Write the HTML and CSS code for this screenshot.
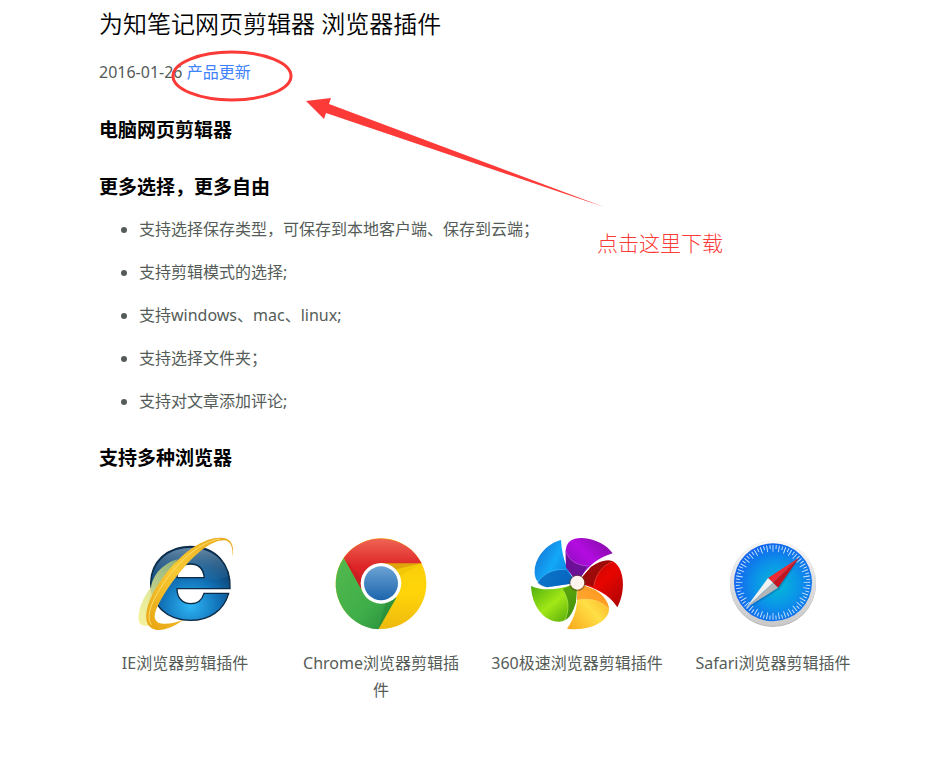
FILE: index.html
```html
<!DOCTYPE html>
<html lang="zh-CN">
<head>
<meta charset="utf-8">
<title>为知笔记网页剪辑器 浏览器插件</title>
<link rel="stylesheet" href="styles.css">
</head>
<body>
<main class="page">
  <article class="post">
    <h1 class="title">为知笔记网页剪辑器 浏览器插件</h1>
    <p class="meta">2016-01-26 <a href="#">产品更新</a></p>
    <h3 class="heading">电脑网页剪辑器</h3>
    <h3 class="heading">更多选择，更多自由</h3>
    <ul class="features">
      <li>支持选择保存类型，可保存到本地客户端、保存到云端；</li>
      <li>支持剪辑模式的选择;</li>
      <li>支持windows、mac、linux;</li>
      <li>支持选择文件夹；</li>
      <li>支持对文章添加评论;</li>
    </ul>
    <h3 class="heading">支持多种浏览器</h3>
  </article>
  <section class="browsers">
    <div class="browser">
      <svg class="logo" viewBox="0 0 330 330" aria-hidden="true">
        <defs>
          <radialGradient id="ieBlue" cx="0.5" cy="0.8" r="0.72">
            <stop offset="0" stop-color="#2db6f6"/><stop offset="0.5" stop-color="#1272b8"/><stop offset="1" stop-color="#0b3560"/>
          </radialGradient>
          <linearGradient id="ieShine" x1="0" y1="0" x2="0" y2="1">
            <stop offset="0" stop-color="#a4c4d8"/><stop offset="1" stop-color="#3b7ba8" stop-opacity="0.3"/>
          </linearGradient>
          <linearGradient id="ieGold" x1="1" y1="0" x2="0" y2="1">
            <stop offset="0" stop-color="#e6a51c"/><stop offset="0.5" stop-color="#f8ca35"/><stop offset="1" stop-color="#e8a413"/>
          </linearGradient>
          <linearGradient id="ieGlow" x1="0" y1="1" x2="1" y2="0">
            <stop offset="0" stop-color="#f8f4a0"/><stop offset="1" stop-color="#b6cf72" stop-opacity="0.7"/>
          </linearGradient>
        </defs>
        <path fill="url(#ieBlue)" stroke="#0c2a44" stroke-width="4" d="M300 176C304 103 258 49 181 49C111 49 62 96 62 160C62 225 111 271 181 271C240 271 282 240 296 190H222C216 211 202 221 182 221C157 221 141 203 141 176ZM141 143C143 117 156 102 181 102C207 102 220 118 223 143Z" fill-rule="evenodd"/>
        <path fill="url(#ieShine)" opacity="0.6" d="M67 142C77 87 123 54 181 54C241 54 286 88 294 139C268 151 247 150 226 144C223 113 208 99 181 99C156 99 141 114 138 143C114 151 88 151 67 142Z"/>
        <path fill="url(#ieGlow)" d="M63 172C37 204 20 250 27 276C32 289 47 289 61 286C51 252 74 196 118 128L143 88C105 98 69 130 63 172Z"/>
        <path fill="url(#ieGold)" d="M307 81C315 41 300 22 270 23C208 24 139 83 92 152C48 213 36 273 63 293C85 309 126 295 160 270C121 283 83 288 75 266C68 238 116 165 164 110C207 61 253 27 286 31C303 36 309 51 307 81Z"/>
        <path fill="none" stroke="#ffe06a" stroke-width="3" d="M64 284C42 254 76 196 106 152C151 88 213 35 270 27"/>
      </svg>
      <span class="label">IE浏览器剪辑插件</span>
    </div>
    <div class="browser">
      <svg class="logo" viewBox="3 0 330 330" aria-hidden="true">
        <defs>
          <linearGradient id="chRed" x1="0" y1="0" x2="0" y2="1"><stop offset="0" stop-color="#ef6554"/><stop offset="0.55" stop-color="#dd2426"/><stop offset="1" stop-color="#d31b20"/></linearGradient>
          <linearGradient id="chGreen" x1="0" y1="0" x2="1" y2="1"><stop offset="0" stop-color="#53b94d"/><stop offset="0.6" stop-color="#3fae49"/><stop offset="1" stop-color="#278c3b"/></linearGradient>
          <linearGradient id="chYellow" x1="0" y1="0" x2="0" y2="1"><stop offset="0" stop-color="#f5c90a"/><stop offset="0.6" stop-color="#ffd509"/><stop offset="1" stop-color="#eeb90e"/></linearGradient>
          <linearGradient id="chBlue" x1="0" y1="0" x2="0" y2="1"><stop offset="0" stop-color="#6ba2d3"/><stop offset="1" stop-color="#1c65ad"/></linearGradient>
        </defs>
        <circle cx="168" cy="161" r="136" fill="url(#chYellow)"/>
        <path fill="url(#chRed)" d="M56 84A137 137 0 0 1 290 100H168L107 178Z"/>
        <path fill="url(#chGreen)" d="M56 84A137 137 0 0 0 160 298L214 203L168 161L110 179Z"/>
        <path fill="#9e171b" opacity="0.22" d="M168 99H290L208 119ZM57 84L108 178L111 146Z"/>
        <path fill="#19702c" opacity="0.25" d="M160 298L214 203L181 220Z"/>
        <path fill="#bd9300" opacity="0.15" d="M290 100H184L224 138Z"/>
        <circle cx="168" cy="160" r="61" fill="#fff"/>
        <circle cx="168" cy="160" r="51" fill="url(#chBlue)"/>
      </svg>
      <span class="label">Chrome浏览器剪辑插<br>件</span>
    </div>
    <div class="browser">
      <svg class="logo" viewBox="0 0 330 330" aria-hidden="true">
        <defs>
          <linearGradient id="fanBlue" x1="0" y1="0.2" x2="1" y2="0.8"><stop offset="0" stop-color="#1674d5"/><stop offset="0.45" stop-color="#12a8f8"/><stop offset="1" stop-color="#0872d6"/></linearGradient>
          <linearGradient id="fanPurple" x1="0" y1="1" x2="1" y2="0"><stop offset="0" stop-color="#7a0eb0"/><stop offset="0.55" stop-color="#b30ce0"/><stop offset="1" stop-color="#7a0b99"/></linearGradient>
          <linearGradient id="fanRed" x1="0" y1="0" x2="1" y2="1"><stop offset="0" stop-color="#a40808"/><stop offset="0.5" stop-color="#e90500"/><stop offset="1" stop-color="#a80404"/></linearGradient>
          <linearGradient id="fanYellow" x1="0" y1="1" x2="1" y2="0"><stop offset="0" stop-color="#f8a719"/><stop offset="0.5" stop-color="#ffdf45"/><stop offset="1" stop-color="#fb9d17"/></linearGradient>
          <linearGradient id="fanGreen" x1="0" y1="0" x2="1" y2="1"><stop offset="0" stop-color="#45a80c"/><stop offset="0.5" stop-color="#a2e817"/><stop offset="1" stop-color="#459d09"/></linearGradient>
        </defs>
        <path fill="url(#fanBlue)" d="M117 30C76 40 41 79 38 121C36 148 49 164 75 172L166 158C139 131 121 93 117 30Z"/>
        <path fill="#075bb2" opacity="0.7" d="M47 158C65 127 101 115 131 119L166 158L75 172C61 169 52 165 47 158Z"/>
        <path fill="none" stroke="#43bdfa" stroke-width="2" d="M47 158C65 127 101 115 131 119"/>
        <path fill="url(#fanPurple)" d="M131 62C133 35 151 23 181 24C218 25 256 46 272 70C232 82 199 103 166 158L132 112Z"/>
        <path fill="#62118b" opacity="0.8" d="M131 62C140 92 165 106 197 108L166 158L132 112Z"/>
        <path fill="none" stroke="#c45bdf" stroke-width="2" d="M131 62C140 92 165 106 197 108"/>
        <path fill="url(#fanRed)" d="M166 158L207 111C237 90 267 86 280 99C309 125 310 188 286 232C262 193 222 174 166 158Z"/>
        <path fill="#900b0b" opacity="0.8" d="M166 158L207 111C237 90 260 88 274 95C243 103 220 134 216 169Z"/>
        <path fill="none" stroke="#f34b3d" stroke-width="2" d="M274 95C243 103 220 134 216 169"/>
        <path fill="url(#fanYellow)" d="M166 158L220 180C252 202 265 226 260 247C248 285 187 304 135 296C159 264 170 223 166 158Z"/>
        <path fill="#ff8d22" opacity="0.7" d="M166 158L220 180C246 197 259 217 261 238C237 211 201 203 165 211Z"/>
        <path fill="none" stroke="#ffe069" stroke-width="2" d="M165 211C201 203 237 211 261 238"/>
        <path fill="url(#fanGreen)" d="M27 168C64 184 111 181 166 158L162 215C151 254 136 273 112 275C65 276 29 226 27 168Z"/>
        <path fill="#398608" opacity="0.7" d="M121 177L166 158L162 215C153 247 144 263 129 270C143 238 141 206 121 177Z"/>
        <path fill="none" stroke="#b5ed58" stroke-width="2" d="M129 270C143 238 141 206 121 177"/>
        <circle cx="166" cy="159" r="25" fill="#574020" opacity="0.5"/>
        <circle cx="166" cy="158" r="21" fill="#fff5ee"/>
      </svg>
      <span class="label">360极速浏览器剪辑插件</span>
    </div>
    <div class="browser">
      <svg class="logo" viewBox="-3 0 330 330" aria-hidden="true">
        <defs>
          <linearGradient id="sfRim" x1="0" y1="0" x2="0" y2="1"><stop offset="0" stop-color="#f7f7f7"/><stop offset="1" stop-color="#c9c9ca"/></linearGradient>
          <radialGradient id="sfFace" cx="0.55" cy="0.53" r="0.55"><stop offset="0" stop-color="#04b9d5"/><stop offset="0.5" stop-color="#0a96e8"/><stop offset="1" stop-color="#1362ee"/></radialGradient>
        </defs>
        <circle cx="162" cy="162" r="129" fill="#b9b9bb"/>
        <circle cx="162" cy="159" r="129" fill="url(#sfRim)"/>
        <circle cx="162" cy="157" r="117" fill="url(#sfFace)"/>
        <circle cx="162" cy="157" r="102" fill="none" stroke="#c4e4fb" stroke-width="20" pathLength="360" stroke-dasharray="1.6 8.4" stroke-dashoffset="0.8"/>
        <circle cx="162" cy="157" r="106" fill="none" stroke="#c4e4fb" stroke-width="12" pathLength="360" stroke-dasharray="1.6 8.4" stroke-dashoffset="5.8"/>
        <path fill="#07508f" opacity="0.35" d="M82 240L182 177L242 84L170 165Z"/>
        <path fill="#ee2b34" d="M240 83L147 144L162 158Z"/>
        <path fill="#c41420" d="M240 83L162 158L177 173Z"/>
        <path fill="#f1f1f1" d="M147 144L80 235L162 158Z"/>
        <path fill="#b5b5b8" d="M80 235L177 173L162 158Z"/>
      </svg>
      <span class="label">Safari浏览器剪辑插件</span>
    </div>
  </section>
  <svg class="marks" width="620" height="220" viewBox="0 0 620 220" aria-hidden="true">
    <ellipse cx="232" cy="76" rx="59" ry="24" fill="none" stroke="#fc3a37" stroke-width="3"/>
    <path fill="#fc3a37" d="M306 101L331 98L329 104L604 207L326 113L324 119Z"/>
  </svg>
  <p class="note">点击这里下载</p>
</main>
</body>
</html>
```
FILE: styles.css
```css
body {
  margin: 0;
  background: #fff;
  color: #555c58;
  font-family: "Noto Sans", "Noto Sans CJK SC", sans-serif;
  font-size: 16px;
  font-weight: 400;
  line-height: 27px;
}

.page {
  position: relative;
  padding: 0 56px 0 87px;
}

.post {
  padding: 0 12px;
}

.title {
  margin: 0;
  color: #000;
  font-size: 24px;
  font-weight: 350;
  line-height: 48px;
}

.meta {
  margin: 11px 0 31px;
}

.meta a {
  color: #4183ff;
  text-decoration: none;
}

.heading {
  margin: 30px 0 0;
  color: #000;
  font-size: 19px;
  font-weight: 700;
  line-height: 27px;
}

.features {
  margin: 15px 0 29px;
  padding-left: 40px;
}

.features li + li {
  margin-top: 16px;
}

.browsers {
  display: grid;
  grid-template-columns: repeat(4, 1fr);
  margin-top: 58px;
}

.browser {
  display: flex;
  flex-direction: column;
  align-items: center;
  gap: 10px;
  padding: 0 12px;
  text-align: center;
}

.logo {
  width: 110px;
  height: 110px;
}

.marks {
  position: absolute;
  top: 0;
  left: 0;
  pointer-events: none;
}

.note {
  position: absolute;
  top: 230px;
  left: 597px;
  margin: 0;
  color: #fc3a37;
  font-size: 21px;
  font-weight: 300;
  white-space: nowrap;
}
```
